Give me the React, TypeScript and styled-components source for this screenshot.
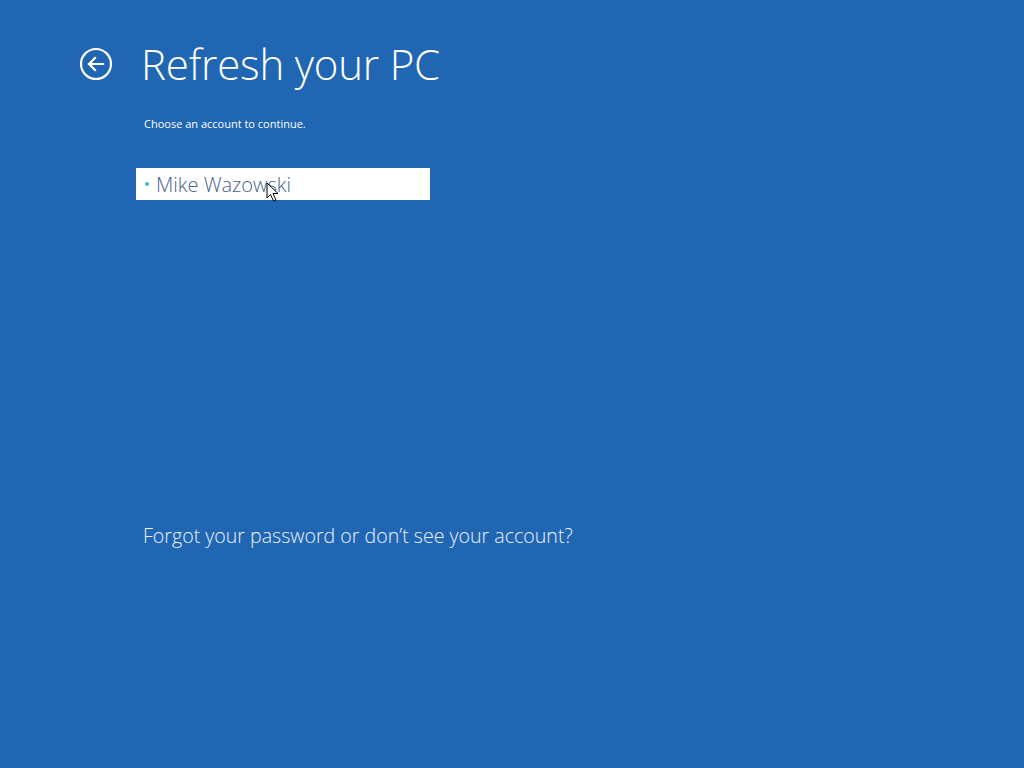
import { FC } from "react";
import styled, { createGlobalStyle } from "styled-components";

const GlobalStyle = createGlobalStyle`
  html, body {
    margin: 0;
    padding: 0;
    background: #2166b2;
  }
  body {
    font-family: "Open Sans", "Noto Sans", sans-serif;
  }
`;

const Screen = styled.div`
  width: 1024px;
  height: 768px;
  background: #2166b2;
  color: #fff;
  overflow: hidden;
`;

const Header = styled.div`
  display: flex;
  align-items: center;
  gap: 28px;
  padding: 34px 0 0 79px;
  height: 60px;
`;

const BackButton = styled.button`
  width: 34px;
  height: 34px;
  padding: 0;
  border: none;
  background: none;
  display: flex;
  align-items: center;
  justify-content: center;
  cursor: pointer;
`;

const Title = styled.h1`
  margin: 0;
  font-size: 42px;
  font-weight: 300;
  letter-spacing: -0.2px;
  color: #fff;
  line-height: 1;
`;

const Body = styled.div`
  padding-left: 136px;
  display: flex;
  flex-direction: column;
`;

const Hint = styled.p`
  margin: 22px 0 0 8px;
  font-size: 11px;
  color: #fff;
`;

const AccountList = styled.ul`
  list-style: none;
  margin: 37px 0 0;
  padding: 0;
`;

const Account = styled.li<{ $selected?: boolean }>`
  width: 294px;
  height: 32px;
  box-sizing: border-box;
  display: flex;
  align-items: center;
  gap: 7px;
  padding-left: 9px;
  background: ${(p) => (p.$selected ? "#fff" : "transparent")};
  color: ${(p) => (p.$selected ? "#4a6590" : "#fff")};
  font-size: 20px;
  font-weight: 300;
  position: relative;
`;

const Dot = styled.span`
  width: 4px;
  height: 4px;
  border-radius: 50%;
  background: #4cb8c4;
`;

const Cursor = styled.svg`
  position: absolute;
  left: 130px;
  top: 14px;
`;

const ForgotLink = styled.a`
  margin: 322px 0 0 7px;
  font-size: 19.6px;
  font-weight: 300;
  color: #eaf2ff;
  text-decoration: none;
  cursor: pointer;
`;

const BackIcon: FC = () => (
  <svg width="34" height="34" viewBox="0 0 34 34" fill="none">
    <circle cx="17" cy="17" r="15" stroke="#fff" strokeWidth="2.2" />
    <path
      d="M10 17 H24 M16 11 L10 17 L16 23"
      stroke="#fff"
      strokeWidth="2.2"
      strokeLinecap="square"
    />
  </svg>
);

const App: FC = () => {
  return (
    <Screen>
      <GlobalStyle />
      <Header>
        <BackButton aria-label="Back">
          <BackIcon />
        </BackButton>
        <Title>Refresh your PC</Title>
      </Header>
      <Body>
        <Hint>Choose an account to continue.</Hint>
        <AccountList>
          <Account $selected>
            <Dot />
            Mike Wazowski
            <Cursor width="14" height="20" viewBox="0 0 14 20">
              <path
                d="M1 1 L1 16 L4.5 12.5 L7.5 19 L10 18 L7 11.5 L12 11.5 Z"
                fill="#fff"
                stroke="#000"
                strokeWidth="1"
                strokeLinejoin="round"
              />
            </Cursor>
          </Account>
        </AccountList>
        <ForgotLink>Forgot your password or don’t see your account?</ForgotLink>
      </Body>
    </Screen>
  );
};

export default App;
